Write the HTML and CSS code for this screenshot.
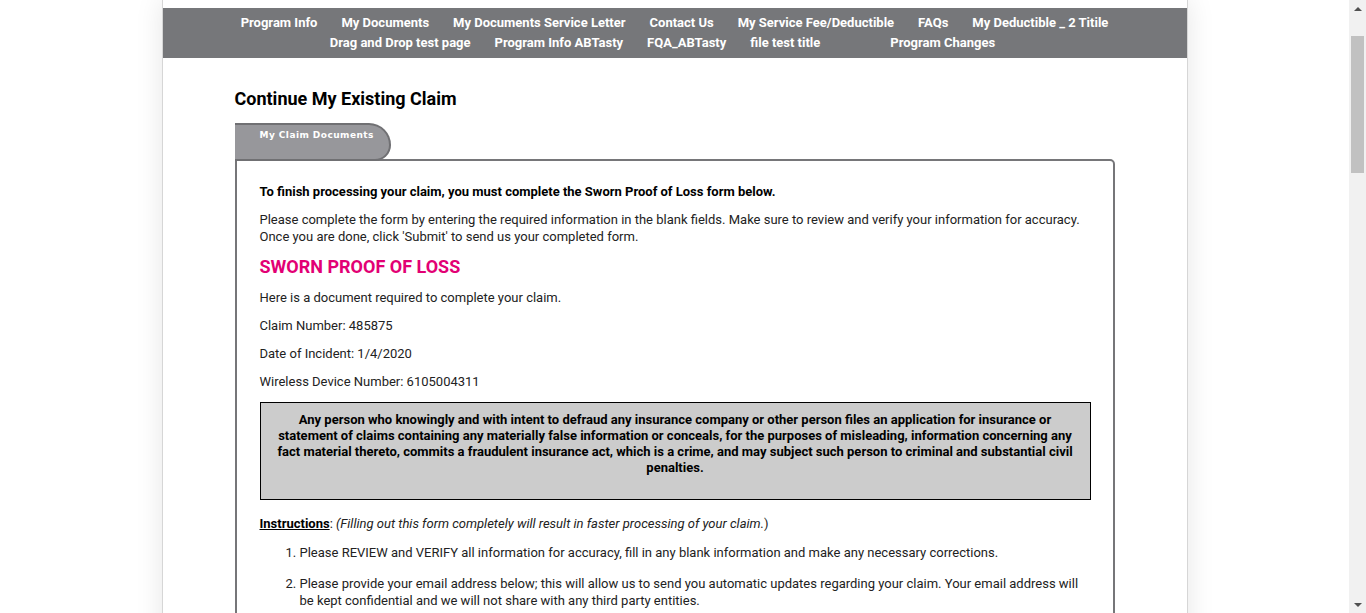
FILE: index.html
```html
<!DOCTYPE html>
<html lang="en">
<head>
<meta charset="utf-8">
<title>Continue My Existing Claim</title>
<link rel="stylesheet" href="styles.css">
</head>
<body>
<div class="viewport">
<div class="page">
  <nav class="nav">
    <div class="nav-row">
      <a href="#">Program Info</a>
      <a href="#">My Documents</a>
      <a href="#">My Documents Service Letter</a>
      <a href="#">Contact Us</a>
      <a href="#">My Service Fee/Deductible</a>
      <a href="#">FAQs</a>
      <a href="#">My Deductible _ 2 Titile</a>
    </div>
    <div class="nav-row">
      <a href="#">Drag and Drop test page</a>
      <a href="#">Program Info ABTasty</a>
      <a href="#">FQA_ABTasty</a>
      <a href="#">file test title</a>
      <span class="nav-spacer"></span>
      <a href="#">Program Changes</a>
      <span class="nav-spacer end"></span>
    </div>
  </nav>

  <main class="main">
    <h1 class="title">Continue My Existing Claim</h1>
    <div class="tab">My Claim Documents</div>
    <section class="panel">
      <p class="lead">To finish processing your claim, you must complete the Sworn Proof of Loss form below.</p>
      <p>Please complete the form by entering the required information in the blank fields. Make sure to review and verify your information for accuracy. Once you are done, click 'Submit' to send us your completed form.</p>
      <h2 class="form-title">SWORN PROOF OF LOSS</h2>
      <p>Here is a document required to complete your claim.</p>
      <p>Claim Number: 485875</p>
      <p>Date of Incident: 1/4/2020</p>
      <p>Wireless Device Number: 6105004311</p>
      <div class="warning">Any person who knowingly and with intent to defraud any insurance company or other person files an application for insurance or statement of claims containing any materially false information or conceals, for the purposes of misleading, information concerning any fact material thereto, commits a fraudulent insurance act, which is a crime, and may subject such person to criminal and substantial civil penalties.</div>
      <p class="instr"><span class="instr-label">Instructions</span>: <em>(Filling out this form completely will result in faster processing of your claim.</em>)</p>
      <ol class="steps">
        <li>Please REVIEW and VERIFY all information for accuracy, fill in any blank information and make any necessary corrections.</li>
        <li>Please provide your email address below; this will allow us to send you automatic updates regarding your claim. Your email address will be kept confidential and we will not share with any third party entities.</li>
        <li>Please sign and date the form in the spaces provided at the bottom of the page.</li>
        <li>Click 'Submit' to send us your completed form.</li>
      </ol>
    </section>
  </main>
</div>
</div>
<div class="scrollbar" aria-hidden="true">
  <div class="sb-btn"><span class="arrow up"></span></div>
  <div class="sb-track"><div class="sb-thumb"></div></div>
  <div class="sb-btn"><span class="arrow down"></span></div>
</div>
</body>
</html>
```

FILE: styles.css
```css
html, body {
  margin: 0;
  padding: 0;
  background: #ffffff;
  height: 100%;
}

body {
  display: flex;
  height: 100vh;
  overflow: hidden;
  font-family: Roboto, "Liberation Sans", Arial, sans-serif;
  color: #222222;
}

.viewport {
  flex: 1;
  min-width: 0;
  overflow: hidden;
}

.page {
  width: 1026px;
  margin: 0 auto;
  padding-top: 8px;
  min-height: 2580px;
  background: #ffffff;
  border-left: 1px solid #d6d6d6;
  border-right: 1px solid #d6d6d6;
  box-sizing: border-box;
  box-shadow: 0 0 26px rgba(0, 0, 0, 0.10);
}

.nav {
  background: #76777a;
  padding: 5px 0 5px;
}

.nav-row {
  display: flex;
  justify-content: center;
  column-gap: 24px;
  line-height: 20px;
}

.nav-row a {
  color: #ffffff;
  font-weight: 700;
  font-size: 13px;
  text-decoration: none;
  white-space: nowrap;
}

.nav-spacer {
  width: 22px;
}

.nav-spacer.end {
  width: 0;
}

.main {
  padding: 0 72px 0 72px;
}

.title {
  margin: 29px 0 12px;
  font-size: 18px;
  line-height: 24px;
  font-weight: 700;
  color: #000000;
}

.tab {
  width: 129px;
  height: 30px;
  box-sizing: content-box;
  padding: 4px 0 0 25px;
  margin-bottom: -2px;
  position: relative;
  z-index: 1;
  background: #97979b;
  border: 2px solid #707073;
  border-left: 0;
  border-radius: 0 22px 16px 0;
  font-family: "DejaVu Sans", Verdana, sans-serif;
  font-weight: 700;
  font-size: 9px;
  letter-spacing: 0.45px;
  line-height: 12px;
  color: #ffffff;
}

.panel {
  border: 2px solid #767679;
  border-top-right-radius: 5px;
  padding: 22px 22px 40px 23px;
  font-size: 13px;
  line-height: 17px;
  min-height: 1800px;
}

.panel p {
  margin: 0 0 11px;
}

.panel .lead {
  font-weight: 700;
  color: #000000;
}

.form-title {
  margin: 0 0 11px;
  font-size: 18px;
  line-height: 22px;
  font-weight: 700;
  color: #e20074;
}

.warning {
  margin: 12px 0 0;
  background: #cccccc;
  border: 1px solid #000000;
  padding: 9px 10px 23px;
  text-align: center;
  font-weight: 700;
  line-height: 16px;
  color: #000000;
}

.panel .instr {
  margin: 15px 0 12px;
}

.instr-label {
  font-weight: 700;
  text-decoration: underline;
  color: #000000;
}

.steps {
  margin: 0;
  padding-left: 40px;
}

.steps li {
  margin-bottom: 14px;
}

/* painted vertical scrollbar */
.scrollbar {
  flex: none;
  width: 17px;
  height: 100vh;
  background: #f1f1f1;
  display: flex;
  flex-direction: column;
}

.sb-btn {
  flex: none;
  height: 17px;
  display: flex;
  align-items: center;
  justify-content: center;
}

.arrow {
  width: 0;
  height: 0;
  border-left: 4px solid transparent;
  border-right: 4px solid transparent;
}

.arrow.up {
  border-bottom: 4px solid #505050;
}

.arrow.down {
  border-top: 4px solid #505050;
}

.sb-track {
  flex: 1;
  padding: 19px 2px 0;
}

.sb-thumb {
  height: 137px;
  background: #c1c1c1;
}
```
